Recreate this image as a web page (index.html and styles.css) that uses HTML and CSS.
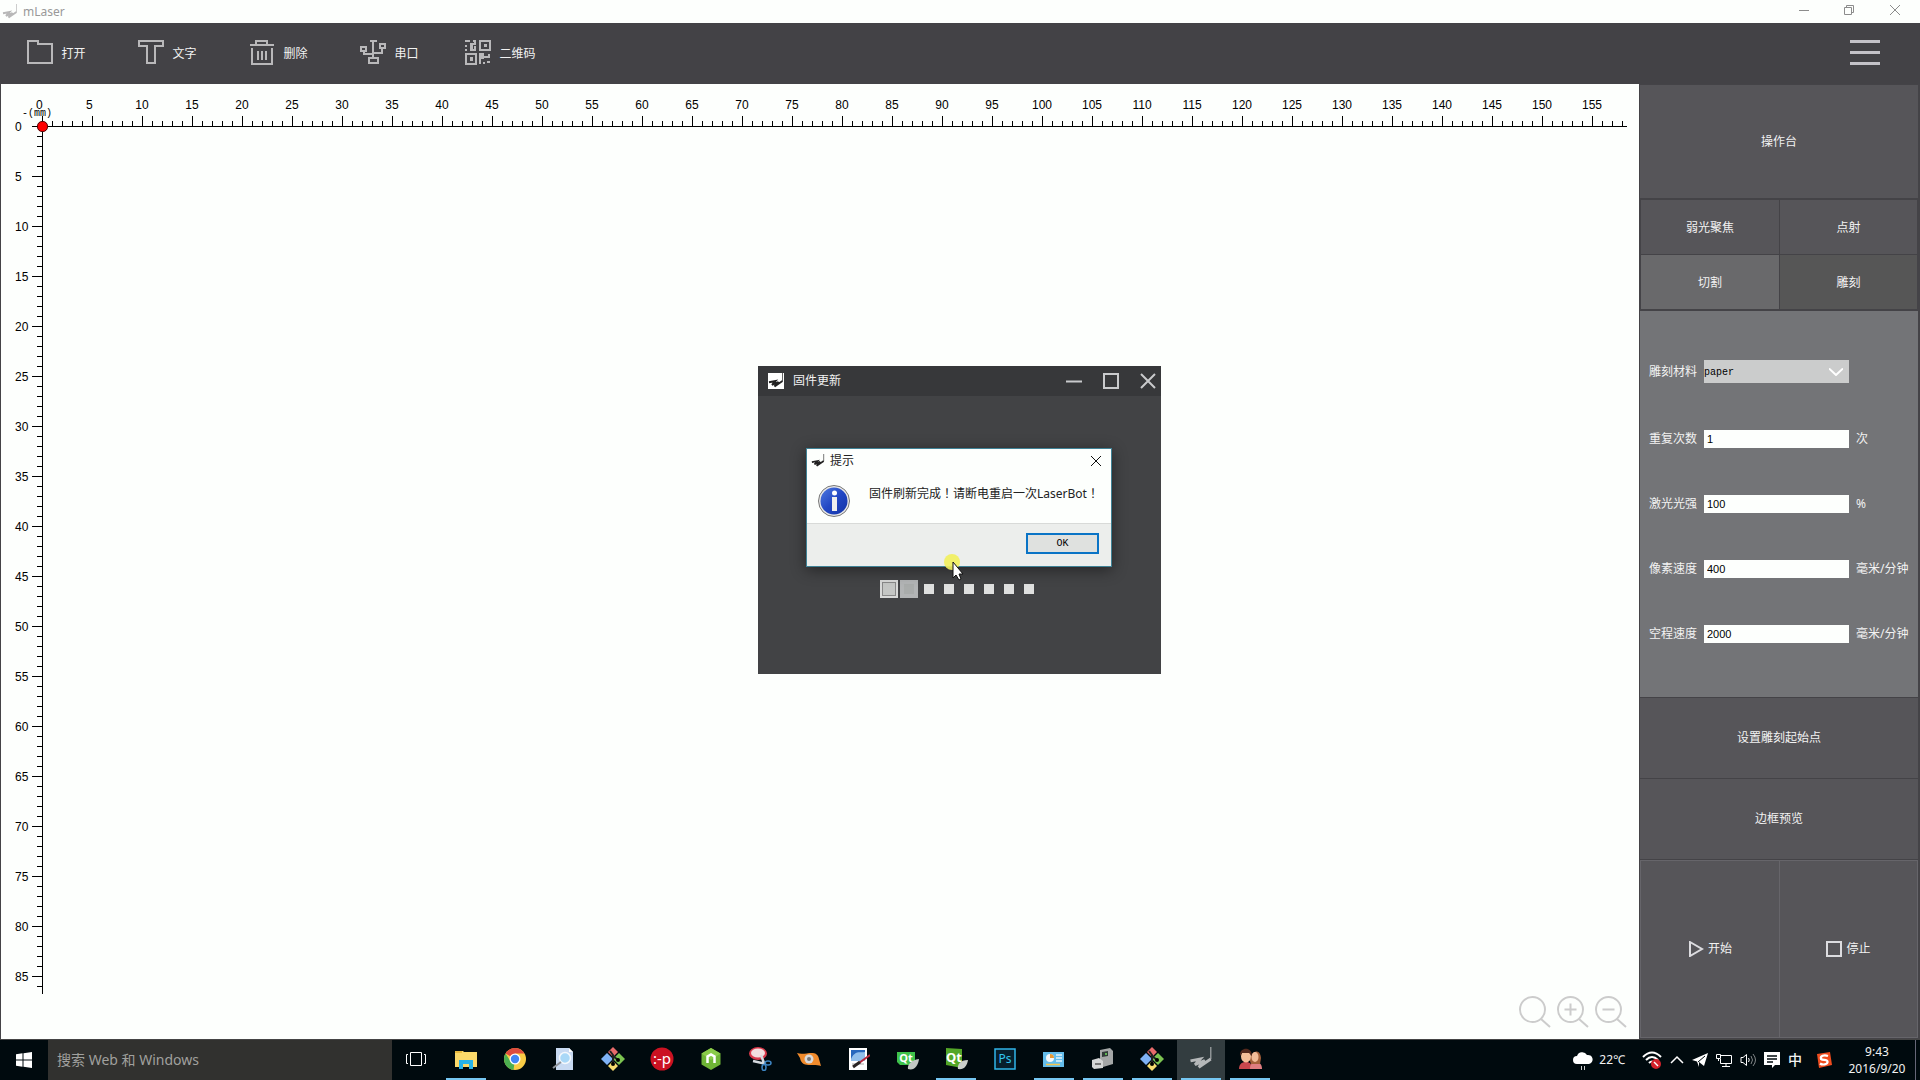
FILE: index.html
```html
<!DOCTYPE html>
<html lang="zh-CN">
<head>
<meta charset="utf-8">
<title>mLaser</title>
<link rel="stylesheet" href="styles.css">
</head>
<body>
<svg class="defs" aria-hidden="true">
  <symbol id="logo" viewBox="0 0 16 16">
    <path d="M14.500 0V8" fill="none" stroke="currentColor" stroke-width="1" opacity=".7"/>
    <path d="M1 9.300 7.500 8 4 11.800 10.500 9 6.500 13.500 14.500 8" fill="none" stroke="currentColor" stroke-width="1.900"/>
  </symbol>
  <symbol id="git" viewBox="0 0 24 24">
    <path d="M12 0 17 5 12 10 7 5Z" fill="#e86b6b"/><path d="M6 6 12 12 6 18 0 12Z" fill="#7fb2f5"/>
    <path d="M18 6 24 12 18 18 12 12Z" fill="#7cc451"/><path d="M12 14 17 19 12 24 7 19Z" fill="#f7dc6f"/>
    <path d="M9 4 12 8V17M12 9 17 13" stroke="#222" stroke-width="2" fill="none"/><circle cx="12" cy="17" r="2"/><circle cx="17" cy="13" r="2"/>
  </symbol>
</svg>

<div class="app">
  <header class="titlebar">
    <svg class="title-logo"><use href="#logo"/></svg>
    <h1>mLaser</h1>
    <div class="window-buttons">
      <button aria-label="最小化"><svg viewBox="0 0 10 10"><path d="M0 5.500H10"/></svg></button>
      <button aria-label="还原"><svg viewBox="0 0 10 10"><path d="M.5 2.500H7.500V9.500H.5ZM2.500 2.500V.5H9.500V7.500H7.500"/></svg></button>
      <button aria-label="关闭"><svg viewBox="0 0 10 10"><path d="M0 0 10 10M10 0 0 10"/></svg></button>
    </div>
  </header>

  <nav class="toolbar">
    <button class="tool"><svg viewBox="0 0 26 26"><path d="M1 2H11V5H25V24H1Z"/></svg>打开</button>
    <button class="tool"><svg viewBox="0 0 26 26"><path d="M1 2H25V7H17V24H9V7H1Z"/></svg>文字</button>
    <button class="tool"><svg viewBox="0 0 26 26"><path d="M1 6H25M7 6V2H18V6M3 9V25H23V9M9 12V21M13 12V21M17 12V21"/></svg>删除</button>
    <button class="tool"><svg viewBox="0 0 26 26"><path d="M10 2H17M13 2V19M9 19H18V24H9ZM1 8H6V12H1ZM20 5H25V9H20ZM4 12V15H13M22 9V14H13"/></svg>串口</button>
    <button class="tool"><svg viewBox="0 0 26 26"><path d="M15 2H25V11H15ZM1 15H11V25H1ZM1 3V2H5M8 2H10V5H5M1 6V8M1 10V12M5 11H10V7M15 25V15H18V18H24V15M22 23H25M18 24H20"/><path class="solid" d="M19 5H22V8H19ZM5 18H8V22H5ZM5 5H8V10H5ZM15 16H19V20H15Z"/></svg>二维码</button>
    <button class="menu" aria-label="菜单"><svg viewBox="0 0 30 26"><path d="M0 2.500H30M0 13.500H30M0 24.500H30"/></svg></button>
  </nav>

  <main class="workspace">
    <section class="stage">
      <span class="unit">-(mm)</span>
      <ol class="ruler-x"><li><span>0</span></li><li><span>5</span></li><li><span>10</span></li><li><span>15</span></li><li><span>20</span></li><li><span>25</span></li><li><span>30</span></li><li><span>35</span></li><li><span>40</span></li><li><span>45</span></li><li><span>50</span></li><li><span>55</span></li><li><span>60</span></li><li><span>65</span></li><li><span>70</span></li><li><span>75</span></li><li><span>80</span></li><li><span>85</span></li><li><span>90</span></li><li><span>95</span></li><li><span>100</span></li><li><span>105</span></li><li><span>110</span></li><li><span>115</span></li><li><span>120</span></li><li><span>125</span></li><li><span>130</span></li><li><span>135</span></li><li><span>140</span></li><li><span>145</span></li><li><span>150</span></li><li><span>155</span></li></ol>
      <ol class="ruler-y"><li>0</li><li>5</li><li>10</li><li>15</li><li>20</li><li>25</li><li>30</li><li>35</li><li>40</li><li>45</li><li>50</li><li>55</li><li>60</li><li>65</li><li>70</li><li>75</li><li>80</li><li>85</li></ol>
      <span class="origin"></span>
      <div class="zoom-tools">
        <button aria-label="适合窗口"><svg viewBox="0 0 32 32"><circle cx="13.500" cy="13.500" r="12.500"/><path d="M22 23 31 31"/></svg></button>
        <button aria-label="放大"><svg viewBox="0 0 32 32"><circle cx="13.500" cy="13.500" r="12.500"/><path d="M22 23 31 31M7.500 13.500H19.500M13.500 7.500V19.500"/></svg></button>
        <button aria-label="缩小"><svg viewBox="0 0 32 32"><circle cx="13.500" cy="13.500" r="12.500"/><path d="M22 23 31 31M7.500 13.500H19.500"/></svg></button>
      </div>
    </section>

    <aside class="sidebar">
      <h2 class="panel-title">操作台</h2>
      <div class="modes">
        <button>弱光聚焦</button><button>点射</button>
        <button class="current">切割</button><button class="alt">雕刻</button>
      </div>
      <form class="settings">
        <div class="field material"><label for="material">雕刻材料</label>
          <span class="select-box"><select id="material"><option>paper</option></select><svg viewBox="0 0 14 8"><path d="M0 .5 7 7 14 .5"/></svg></span></div>
        <div class="field"><label for="repeat">重复次数</label><input id="repeat" type="text" value="1"><span>次</span></div>
        <div class="field"><label for="power">激光光强</label><input id="power" type="text" value="100"><span>%</span></div>
        <div class="field"><label for="pixel-speed">像素速度</label><input id="pixel-speed" type="text" value="400"><span>毫米/分钟</span></div>
        <div class="field"><label for="idle-speed">空程速度</label><input id="idle-speed" type="text" value="2000"><span>毫米/分钟</span></div>
      </form>
      <button class="wide">设置雕刻起始点</button>
      <button class="wide">边框预览</button>
      <div class="run">
        <button><svg viewBox="0 0 16 16"><path d="M2 1 14 8 2 15Z"/></svg>开始</button>
        <button><svg viewBox="0 0 16 16"><path d="M1 1H15V15H1Z"/></svg>停止</button>
      </div>
    </aside>
  </main>

  <footer class="taskbar">
    <button class="start" aria-label="开始"><svg viewBox="0 0 16 16"><path d="M0 2.200 6.500 1.300V7.500H0ZM7.500 1.200 16 0V7.500H7.500ZM0 8.500H6.500V14.700L0 13.800ZM7.500 8.500H16V16L7.500 14.800Z" fill="#fff"/></svg></button>
    <input class="search" type="text" placeholder="搜索 Web 和 Windows" aria-label="搜索">
    <div class="tasks">
      <button class="task-view" aria-label="任务视图"><svg viewBox="0 0 24 24" fill="none" stroke="#fff"><path d="M6.500 5.500H17.500V18.500H6.500ZM4 7.500H2.500V16.500H4M20 7.500H21.500V16.500H20"/></svg></button>
      <button class="open" aria-label="文件资源管理器"><svg viewBox="0 0 24 24"><path d="M1 4H9L10 5H23V20H1Z" fill="#fbd96a"/><path d="M1 4H8V6H1Z" fill="#e9b93e"/><path d="M5 13H19V22H15V17H9V22H5Z" fill="#26b3e8"/></svg></button>
      <button aria-label="Chrome"><svg viewBox="0 0 24 24"><circle cx="12" cy="12" r="11" fill="#f9cc45"/><path d="M12 12 2.500 6.500A11 11 0 0 1 21.500 6.500H12Z" fill="#dd4b3e"/><path d="M12 12 10.500 23A11 11 0 0 1 2.500 6.500L8 15Z" fill="#4caf50"/><circle cx="12" cy="12" r="5.500" fill="#fff"/><circle cx="12" cy="12" r="4.200" fill="#4285f4"/></svg></button>
      <button aria-label="文件搜索"><svg viewBox="0 0 24 24"><path d="M4 1H17L21 5V23H4Z" fill="#c8daf2"/><path d="M17 1V5H21Z" fill="#fff"/><circle cx="13" cy="11" r="5.500" fill="#a9d8f7" stroke="#f4f8fc" stroke-width="1.500"/><path d="M9 15 1 21" stroke="#8d9298" stroke-width="2"/></svg></button>
      <button aria-label="Git"><svg><use href="#git"/></svg></button>
      <button aria-label="表情"><svg viewBox="0 0 24 24"><circle cx="12" cy="12" r="11.500" fill="#cb1222"/><text x="12" y="17" text-anchor="middle" font-size="15" fill="#fff">:-p</text></svg></button>
      <button aria-label="Node"><svg viewBox="0 0 24 24"><path d="M12 1 21.500 6.500V17.500L12 23 2.500 17.500V6.500Z" fill="#6fb536"/><path d="M12 1 21.500 6.500 12 13 2.500 6.500Z" fill="#8acb49"/><path d="M8.500 16V9.500L12 7.500 15.500 9.500V16" fill="none" stroke="#fff" stroke-width="2.500"/></svg></button>
      <button aria-label="截图工具"><svg viewBox="0 0 24 24"><ellipse cx="10" cy="6.500" rx="9" ry="6.500" fill="#d9384a"/><ellipse cx="10" cy="6" rx="7" ry="4.500" fill="#f3dede"/><path d="M5 14 18 17M13 8 16 16" stroke="#d5d9de" stroke-width="2.500"/><g fill="none" stroke="#3d85c2" stroke-width="1.500"><ellipse cx="20" cy="16" rx="3" ry="2"/><ellipse cx="16" cy="20.500" rx="2" ry="3"/></g></svg></button>
      <button aria-label="看图"><svg viewBox="0 0 24 24"><path d="M0 6C8 9 20 1 22 12L24 19C16 16 5 22 3 11Z" fill="#f08b2c"/><circle cx="12" cy="12" r="4.500" fill="#dadada"/><circle cx="12" cy="12" r="2" fill="#777"/></svg></button>
      <button aria-label="绘图"><svg viewBox="0 0 24 24"><path d="M3 1H21V23H3Z" fill="#fff"/><path d="M5 3H19V14H5Z" fill="#2868bd"/><path d="M5 12C9 3 14 6 19 5V14H5Z" fill="#92bfeb"/><path d="M6 17H18" stroke="#aaa"/><path d="M24 8 13 16" stroke="#b8263c" stroke-width="2"/><path d="M14 15 7 20" stroke="#2a2323" stroke-width="3"/></svg></button>
      <button aria-label="Qt 设计器"><svg viewBox="0 0 24 24"><path d="M2 5H20V18H5L2 15Z" fill="#3ec24b"/><text x="11" y="15" text-anchor="middle" font-size="11" font-weight="bold" fill="#fff">Qt</text><path d="M24 12C16 13 12 18 13 22 19 24 23 19 24 12Z" fill="#c3c8c4"/></svg></button>
      <button class="open" aria-label="Qt Creator"><svg viewBox="0 0 24 24"><path d="M2 1 18 2V21L2 18Z" fill="#53a628"/><text x="10" y="15" text-anchor="middle" font-size="13" font-weight="bold" fill="#fff">Qt</text><path d="M24 13C16 13 13 18 14 22 20 23 23 19 24 13Z" fill="#cbcfcc"/></svg></button>
      <button aria-label="Photoshop"><svg viewBox="0 0 24 24"><path d="M2 2H22V22H2Z" fill="#071e2c" stroke="#31b5e9" stroke-width="1.500"/><text x="12" y="16" text-anchor="middle" font-size="12" fill="#31c5f0">Ps</text></svg></button>
      <button class="open" aria-label="控制面板"><svg viewBox="0 0 24 24"><path d="M1 5H22V20H1Z" fill="#64bdeb"/><circle cx="8" cy="11" r="4" fill="#f6f8f9"/><path d="M8 11V7A4 4 0 0 1 12 11Z" fill="#e79a35"/><path d="M14 8H20M14 11H20M14 14H20" stroke="#e4f5fd" stroke-width="1.500"/><path d="M4 17.500H18" stroke="#f5c64d" stroke-width="1.500"/></svg></button>
      <button class="open" aria-label="设备"><svg viewBox="0 0 24 24"><path d="M9 3 19 1 22 4V17L12 20 9 16Z" fill="#a4a7a7"/><path d="M11 5 17 4V9L11 10Z" fill="#303b38"/><path d="M1 13 8 11 12 14V21L3 22 1 20Z" fill="#d4d6d6"/><path d="M4 17H10" stroke="#777" stroke-width="2"/><circle cx="15" cy="7" r="1" fill="#6ee05d"/></svg></button>
      <button class="open" aria-label="Git"><svg><use href="#git"/></svg></button>
      <button class="open active" aria-label="mLaser"><svg><use href="#logo"/></svg></button>
      <button class="open" aria-label="联系人"><svg viewBox="0 0 24 24"><path d="M1 22C1 16 5 15 8 15S14 16 14 22Z" fill="#c9474d"/><path d="M12 22C12 16 15 15 18 15S24 17 24 22Z" fill="#df7d81"/><path d="M12 14C12 4 22 0 23 11L22 17H13Z" fill="#a5613b"/><ellipse cx="17" cy="10" rx="3.500" ry="5" fill="#f2bd99"/><ellipse cx="8" cy="9.500" rx="5" ry="6" fill="#f4be98"/><path d="M2 9C1 0 14-1 14 9L11 6 4 6Z" fill="#54291d"/></svg></button>
    </div>
    <div class="tray">
      <svg class="cloud" viewBox="0 0 20 20"><path d="M4 14A4 4 0 0 1 4 6 5.500 5.500 0 0 1 14 5 4.500 4.500 0 0 1 16 14Z" fill="#fff"/><path d="M8.500 16V20M11.500 16V20" stroke="#ccc"/></svg>
      <span class="temperature">22℃</span>
      <svg class="wifi" viewBox="0 0 20 20" fill="none" stroke="#fff" stroke-width="2"><path d="M1 7Q10-2 19 7M4 10Q10 4 16 10M7 13Q10 10 13 13"/><circle cx="14" cy="14" r="4" fill="#d3222b" stroke="#d3222b"/><path d="M12 12 16 16" stroke-width="1.500"/></svg>
      <svg class="caret" viewBox="0 0 14 14" fill="none" stroke="#fff" stroke-width="1.500"><path d="M1 10 7 4 13 10"/></svg>
      <svg viewBox="0 0 16 16"><path d="M0 8 16 1 12 14 7 10 7 15 5 9.500Z" fill="#fff"/><path d="M6 10 13 4" stroke="#000a0e"/></svg>
      <svg viewBox="0 0 16 16" fill="none" stroke="#fff"><path d="M5 3.500H15.500V11.500H4.500V7M10 12V14.500M6 14.500H14M.5 2.500H4.500V6.500H.5ZM2.500 6V9"/></svg>
      <svg viewBox="0 0 16 16" fill="none" stroke="#fff"><path d="M1 5.500H3L6.500 2.500V13.500L3 10.500H1ZM8.500 6Q10 8 8.500 10"/><path d="M11 4Q14 8 11 12M13 2Q18 8 13 14" opacity=".5"/></svg>
      <svg viewBox="0 0 16 16"><path d="M0 0H16V13H11L8 16V13H0Z" fill="#fff"/><path d="M3 4H13M3 7H13M3 10H9" stroke="#000a0e" stroke-width="1.500"/></svg>
      <span class="ime">中</span>
      <svg class="sogou" viewBox="0 0 16 16"><path d="M1 2 14 0 16 13 3 16Z" fill="#ee4c1e"/><path d="M12 4C8 2.500 4 4 5 7 7 8.500 11 7 11.500 9.500 12 13 6 13 4 11.500" fill="none" stroke="#fff" stroke-width="2.200"/></svg>
      <time class="clock">9:43<br>2016/9/20</time>
    </div>
  </footer>

  <div class="overlay">
    <section class="update" aria-label="固件更新">
      <header class="update-bar">
        <svg class="update-logo"><use href="#logo"/></svg>
        <h2>固件更新</h2>
        <button aria-label="最小化"><svg viewBox="0 0 16 16"><path d="M0 8.500H16"/></svg></button>
        <button aria-label="最大化"><svg viewBox="0 0 16 16"><path d="M1 1H15V15H1Z"/></svg></button>
        <button aria-label="关闭"><svg viewBox="0 0 16 16"><path d="M1 1 15 15M15 1 1 15"/></svg></button>
      </header>
      <div class="progress"><i class="big"></i><i class="mid"></i><i></i><i></i><i></i><i></i><i></i><i></i></div>
      <section class="message" role="dialog" aria-label="提示">
        <header><svg class="message-logo"><use href="#logo"/></svg><h3>提示</h3><button aria-label="关闭"><svg viewBox="0 0 12 12"><path d="M1 1 11 11M11 1 1 11"/></svg></button></header>
        <div class="message-body">
          <svg viewBox="0 0 32 32"><defs><linearGradient id="blue" x1="0" y1="0" x2="1" y2="1"><stop offset="0" stop-color="#4f7be0"/><stop offset=".5" stop-color="#2247c4"/><stop offset="1" stop-color="#1334a6"/></linearGradient></defs><circle cx="16" cy="16" r="15.500" fill="#e8e8e8" stroke="#777"/><circle cx="16" cy="16" r="13.500" fill="url(#blue)"/><circle cx="16.500" cy="8" r="2.500" fill="#fff"/><path d="M14 12H19V26H14Z" fill="#eee"/></svg>
          <p>固件刷新完成<span class="mark" lang="zh-TW">！</span>请断电重启一次LaserBot<span class="mark" lang="zh-TW">！</span></p>
        </div>
        <footer><button>OK</button></footer>
      </section>
      <span class="pointer"><svg viewBox="0 0 20 27"><circle cx="8" cy="8" r="8" fill="#f2f05c" opacity=".9"/><path d="M9 8V24L12 21 15 26 17 25 15 20H19Z" fill="#fff" stroke="#111"/></svg></span>
    </section>
  </div>
</div>
</body>
</html>
```
FILE: styles.css
```css
* { box-sizing: border-box; }
body {
  margin: 0;
  font: 12px/16px "Noto Sans", "Noto Sans CJK SC", sans-serif;
  color: #f2f2f2;
}
h1, h2, h3, p, ol { margin: 0; padding: 0; font-size: 12px; font-weight: 400; }
ol { list-style: none; }
button { border: 0; padding: 0; background: none; color: inherit; font: inherit; }
input, select { border: 0; border-radius: 0; min-width: 0; }
svg { display: block; flex: none; }
.defs { position: absolute; width: 0; height: 0; }

.app { position: relative; display: flex; flex-direction: column; min-height: 100vh; }

/* window title bar */
.titlebar { display: flex; align-items: center; height: 23px; padding-left: 2px; background: #fdfffd; color: #999; }
.title-logo { width: 16px; height: 16px; color: #b8b8b8; }
.titlebar h1 { margin-left: 5px; }
.window-buttons { display: flex; align-self: flex-start; margin-left: auto; padding-right: 1px; }
.window-buttons button { display: grid; place-items: center; width: 45px; height: 20px; }
.window-buttons button:last-child { width: 48px; }
.window-buttons svg { width: 10px; height: 10px; fill: none; stroke: #8c8c8c; }

/* toolbar */
.toolbar { display: flex; align-items: center; height: 61px; padding-left: 1px; background: #434246; }
.tool { display: flex; align-items: center; justify-content: center; gap: 8px; width: 111px; height: 61px; }
.tool svg { width: 26px; height: 26px; margin-bottom: 3px; fill: none; stroke: #b9b8ba; stroke-width: 2; }
.tool svg .solid { fill: #b9b8ba; stroke: none; }
.menu { margin: 0 40px 3px auto; }
.menu svg { width: 30px; height: 26px; stroke: #c4c2c8; stroke-width: 3; }

.workspace { display: flex; flex: 1; border-bottom: 1px solid #444; }

/* drawing stage with rulers */
.stage {
  position: relative;
  flex: 1;
  min-width: 0;
  display: grid;
  grid-template: 43px minmax(0, 1fr) 45px / 42px minmax(0, 1fr);
  padding-right: 12px;
  border-left: 1px solid #444347;
  background: #fdfffd;
  color: #000;
  font: 11px/12px "Liberation Sans", sans-serif;
}
.ruler-x {
  grid-area: 1 / 2;
  display: flex;
  margin-left: -1px;
  padding-top: 15px;
  background:
    linear-gradient(#000, #000) 0 100% / 100% 1px no-repeat,
    repeating-linear-gradient(90deg, #000 0 1px, transparent 1px 50px) 0 100% / 100% 11px no-repeat,
    repeating-linear-gradient(90deg, #000 0 1px, transparent 1px 10px) 0 100% / 100% 6px no-repeat;
}
.ruler-x li { flex: 0 0 50px; text-align: center; }
.ruler-x li:first-child { margin-left: -25px; }
.ruler-x span { display: inline-block; min-width: 12px; text-align: left; }
.ruler-y {
  grid-area: 2 / 1;
  margin-top: -1px;
  background:
    linear-gradient(#000, #000) 100% 0 / 1px 100% no-repeat,
    repeating-linear-gradient(#000 0 1px, transparent 1px 50px) 100% 0 / 11px 100% no-repeat,
    repeating-linear-gradient(#000 0 1px, transparent 1px 10px) 100% 0 / 6px 100% no-repeat;
}
.ruler-y li { height: 50px; padding-left: 14px; line-height: 50px; }
.ruler-y li:first-child { margin-top: -24px; }
.ruler-y li:last-child { margin-bottom: -25px; }
.unit { position: absolute; left: 21px; top: 25px; font: 10px/10px "Liberation Mono", monospace; }
.origin { position: absolute; left: 36px; top: 37px; width: 11px; height: 11px; border: 1px solid #500; border-radius: 5px; background: #f00; }
.zoom-tools { grid-area: 3 / 2; display: flex; justify-content: flex-end; align-items: flex-start; gap: 6px; padding-top: 2px; }
.zoom-tools svg { width: 32px; height: 32px; fill: none; stroke: #ccc; stroke-width: 2; }

/* control panel */
.sidebar {
  flex: 0 0 281px;
  display: grid;
  grid-template-rows: 113px auto auto 80px 80px minmax(150px, 1fr);
  gap: 1px;
  padding: 1px 2px 1px 1px;
  background: #444347;
}
.panel-title, .wide, .run { display: grid; place-items: center; background: #565559; }
.modes { display: grid; grid-template-columns: 138px 1fr; grid-auto-rows: 54px; gap: 1px; padding: 1px; }
.modes button { padding-top: 1px; background: #565559; }
.modes .current { background: #69696b; }
.modes .alt { background: #565656; }
.settings { padding: 28px 0 30px 9px; height: 386px; background: #737477; }
.field { display: grid; grid-template-columns: 48px 145px 1fr; gap: 7px; align-items: center; height: 65px; white-space: nowrap; }
.material { margin-bottom: 2px; }
.field input { height: 18px; padding: 0 3px; background: #fdfffd; color: #000; font: 11px/18px "Liberation Sans", sans-serif; }
.select-box { display: grid; align-items: center; height: 23px; background: #cbcccc; }
.select-box select { grid-area: 1 / 1; height: 23px; padding: 2px 0 0; appearance: none; background: none; color: #000; font: 10px/21px "Liberation Mono", monospace; }
.select-box svg { grid-area: 1 / 1; justify-self: end; width: 14px; height: 8px; margin-right: 6px; fill: none; stroke: #fff; stroke-width: 2; }
.run { grid-template-columns: 1fr 1fr; border: 1px solid #66656a; }
.run button { display: flex; align-items: center; justify-content: center; gap: 4px; width: 100%; height: 100%; }
.run button + button { border-left: 1px solid #66656a; }
.run svg { width: 16px; height: 16px; fill: none; stroke: #dcdce0; stroke-width: 2; }

/* desktop task bar */
.taskbar { display: flex; height: 40px; background: #000a0e; }
.start { display: grid; place-items: center; width: 48px; }
.start svg { width: 16px; height: 16px; }
.search { width: 344px; padding: 0 9px; background: #31312f; color: #999; font: 14px/20px "Noto Sans", "Noto Sans CJK SC", sans-serif; }
.search::placeholder { color: #a0a09e; opacity: 1; }
.tasks { display: flex; gap: 1px; }
.tasks button { display: grid; place-items: center; width: 48px; border: solid transparent; border-width: 0 4px 2px; }
.tasks svg { width: 24px; height: 24px; font-family: "Noto Sans", sans-serif; }
.tasks .task-view { margin-right: 1px; }
.tasks .open { background: linear-gradient(#76c7f2, #76c7f2) 50% 100% / 40px 2px no-repeat border-box; }
.tasks .active { background-color: #333d40; color: #b5b8b9; }
.tray { display: flex; align-items: center; gap: 8px; margin-left: auto; margin-right: 4px; border-right: 1px solid #667; }
.tray svg { width: 16px; height: 16px; }
.tray .cloud { width: 20px; height: 20px; margin-right: -2px; }
.temperature { margin-right: 9px; }
.tray .wifi { width: 20px; height: 20px; }
.tray .caret { width: 14px; height: 14px; }
.ime { width: 16px; font-size: 14px; font-weight: 500; }
.tray .sogou { margin-left: 4px; }
.clock { width: 68px; line-height: 17px; text-align: center; white-space: nowrap; }
.tray .clock { width: 76px; margin-left: -1px; }

/* firmware update window */
.overlay { position: absolute; inset: 0 1px 40px 0; display: grid; place-items: center; }
.update { position: relative; width: 403px; height: 308px; background: #424345; }
.update-bar { display: flex; align-items: center; height: 30px; padding: 0 5px 0 10px; background: #37383a; }
.update-bar h2 { flex: 1; margin-left: 9px; }
.update-bar button + button { margin-left: 21px; }
.update-bar svg { width: 16px; height: 16px; fill: none; stroke: #c9cacc; stroke-width: 2; }
.update-bar .update-logo { background: #fff; color: #222; stroke: none; }
.progress { display: flex; align-items: center; height: 18px; margin: 184px 0 0 121px; }
.progress i { width: 10px; height: 10px; margin: 0 5px; background: #dfe0df; }
.progress .big { width: 18px; height: 18px; margin: 0 1px; border: 2px solid #d8d9d8; outline: 1px solid #888; outline-offset: -3px; background: #c4c6c4; }
.progress .mid { width: 18px; height: 18px; margin: 0 1px; border: 4px solid #b2b4b5; background: #a9acab; }

.message {
  position: absolute;
  left: 48px;
  top: 82px;
  width: 306px;
  border: 1px solid #3f8296;
  background: #fdfffd;
  box-shadow: 0 3px 14px rgba(0, 0, 0, .45);
  color: #222;
}
.message header { display: flex; align-items: center; height: 24px; padding: 0 9px 0 4px; }
.message header h3 { flex: 1; margin-left: 5px; }
.message header button svg { width: 12px; height: 12px; stroke: #111; }
.message-logo { width: 14px; height: 16px; }
.message-body { display: flex; gap: 19px; height: 50px; padding: 12px 0 0 11px; white-space: nowrap; }
.message-body svg { width: 32px; height: 32px; }
.mark { font-family: "Noto Sans CJK TC", sans-serif; }
.message footer { display: flex; justify-content: flex-end; height: 43px; padding: 9px 12px 0; border-top: 1px solid #d8dad8; background: #eceeec; }
.message footer button { width: 73px; height: 21px; border: 2px solid #0a74c6; background: #dfe1df; color: #000; font: 10px/16px "Liberation Mono", monospace; }
.pointer { position: absolute; left: 186px; top: 188px; width: 20px; height: 27px; }
```
